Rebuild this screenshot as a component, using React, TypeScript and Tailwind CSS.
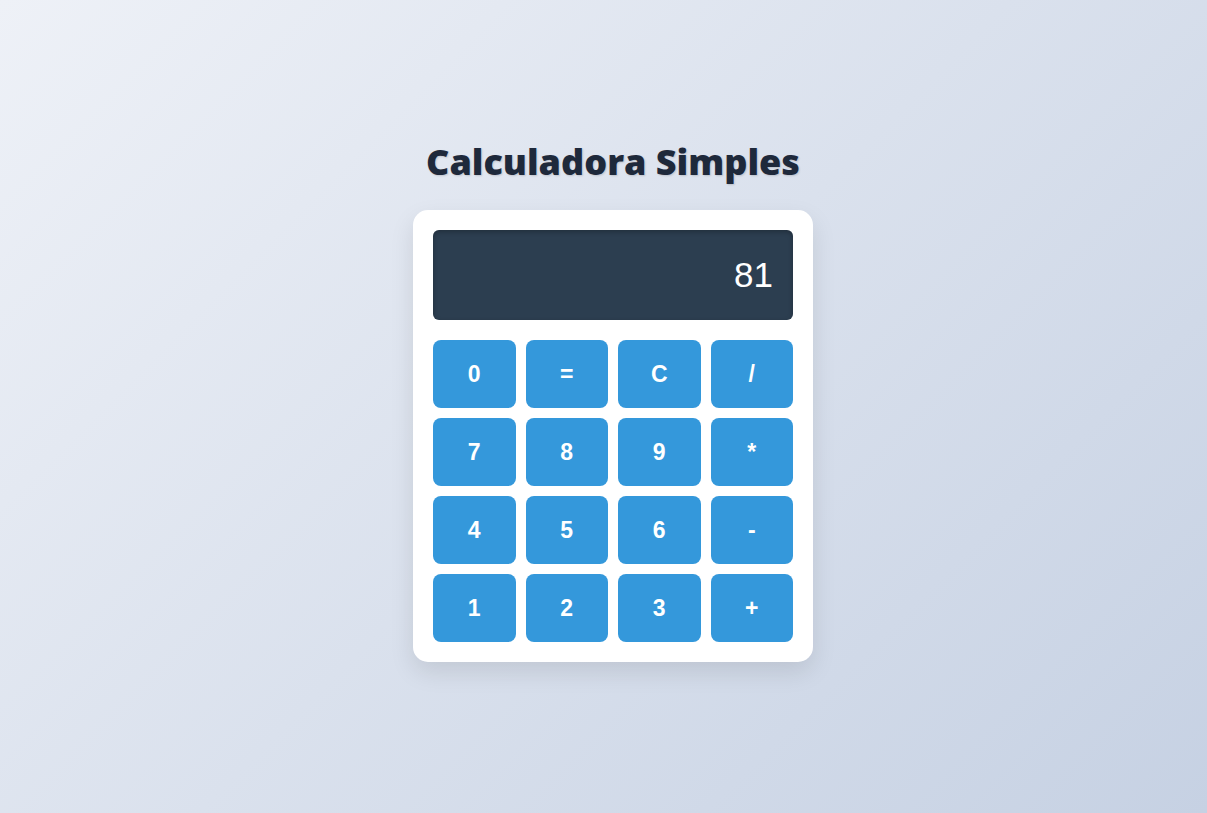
import React from "react";

const keys = ["0", "=", "C", "/", "7", "8", "9", "*", "4", "5", "6", "-", "1", "2", "3", "+"];

export default function App() {
  return (
    <div className="min-h-screen w-full flex flex-col items-center bg-[linear-gradient(135deg,#eef1f7_0%,#c6d1e3_100%)] pt-[140px] pl-[19px]">
      <h1
        className="text-[36px] leading-[44px] font-extrabold text-[#1e293b] mb-[26px] [text-shadow:1px_1px_2px_rgba(0,0,0,0.15)]"
        style={{ fontFamily: '"Open Sans", "Noto Sans", sans-serif' }}
      >
        Calculadora Simples
      </h1>
      <div className="w-[400px] bg-white rounded-[15px] p-5 shadow-[0_10px_25px_rgba(0,0,0,0.1)]">
        <div
          className="h-[90px] bg-[#2c3e50] rounded-[6px] flex items-center justify-end pr-5 text-white text-[35px] shadow-[inset_0_2px_5px_rgba(0,0,0,0.25)]"
          style={{ fontFamily: '"Liberation Sans", Arial, sans-serif' }}
        >
          81
        </div>
        <div className="grid grid-cols-4 gap-[10px] mt-5">
          {keys.map((k) => (
            <button
              key={k}
              className="h-[68px] bg-[#3498db] rounded-[8px] text-white font-bold text-[23px] flex items-center justify-center"
              style={{ fontFamily: '"Liberation Sans", Arial, sans-serif' }}
            >
              {k}
            </button>
          ))}
        </div>
      </div>
    </div>
  );
}
